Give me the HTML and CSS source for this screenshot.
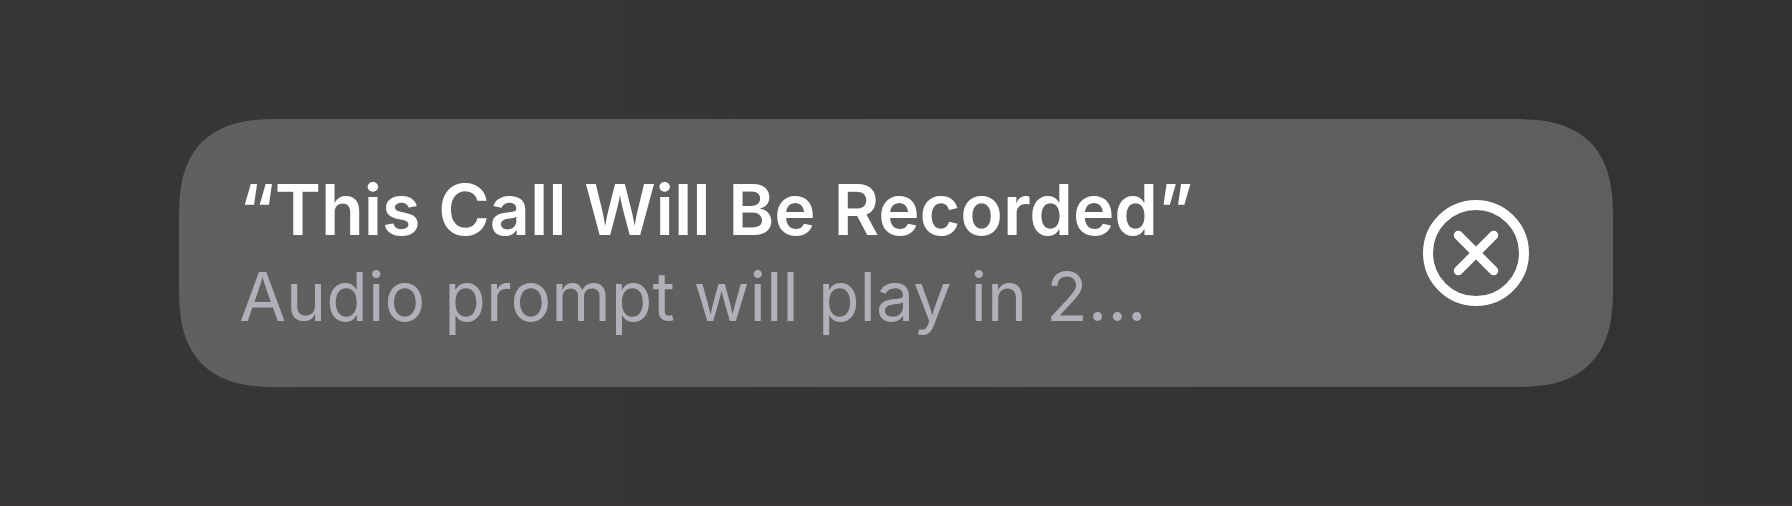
FILE: index.html
```
<!DOCTYPE html>
<html lang="en">
<head>
<meta charset="utf-8">
<meta name="viewport" content="width=device-width, initial-scale=1">
<title>Call recording</title>
<link rel="stylesheet" href="styles.css">
</head>
<body>
<main class="banner">
<div class="message" role="status">
<h1 class="title">“This Call Will Be Recorded”</h1>
<p class="subtitle">Audio prompt will play in 2...</p>
</div>
<button class="cancel" type="button" aria-label="Cancel recording">
<svg class="cancel-icon" viewBox="0 0 106 106" aria-hidden="true">
<circle cx="53" cy="53" r="48" stroke-width="10"/>
<path d="M35.3 35.3L70.7 70.7M70.7 35.3L35.3 70.7" stroke-width="9"/>
</svg>
</button>
</main>
</body>
</html>
```
FILE: styles.css
```
body {
  margin: 0;
  min-height: 100vh;
  box-sizing: border-box;
  display: flex;
  align-items: center;
  justify-content: center;
  border-bottom: 1px solid #3b353a;
  background: linear-gradient(to right, #373737, #323232);
  font-family: Inter, sans-serif;
}
.banner {
  box-sizing: border-box;
  width: 80%;
  display: flex;
  align-items: center;
  justify-content: space-between;
  padding: 48px 84px 48px 60px;
  border-radius: 78px;
  background: linear-gradient(to right, #606060, #5e5e5e);
}
@supports (corner-shape: superellipse(1.4)) {
  .banner {
    border-radius: 100px;
    corner-shape: superellipse(1.4);
  }
}
.title,
.subtitle {
  margin: 0;
  line-height: 86px;
  white-space: nowrap;
}
.title {
  font-size: 70px;
  font-weight: 600;
  color: #fff;
}
.subtitle {
  font-size: 68px;
  font-weight: 400;
  color: #b1b0b8;
}
.cancel {
  padding: 0;
  border: 0;
  background: none;
  cursor: pointer;
}
.cancel-icon {
  display: block;
  width: 106px;
  height: 106px;
  fill: none;
  stroke: #fff;
  stroke-linecap: round;
}
```
